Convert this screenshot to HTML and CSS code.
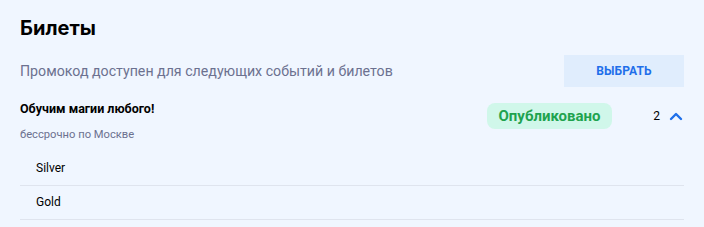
FILE: index.html
```html
<!DOCTYPE html>
<html lang="ru">
<head>
<meta charset="utf-8">
<link rel="stylesheet" href="styles.css">
</head>
<body>
<div class="page">
  <h1 class="title">Билеты</h1>
  <div class="promo">
    <p class="promo-text">Промокод доступен для следующих событий и билетов</p>
    <button class="btn">ВЫБРАТЬ</button>
  </div>
  <div class="event">
    <div class="event-info">
      <div class="event-name">Обучим магии любого!</div>
      <div class="event-date">бессрочно по Москве</div>
    </div>
    <span class="badge">Опубликовано</span>
    <div class="count">
      <span class="num">2</span>
      <svg class="chev" width="16" height="10" viewBox="0 0 16 10"><path d="M3 8 L8 3 L13 8" fill="none" stroke="#1f6fea" stroke-width="2.4" stroke-linecap="round" stroke-linejoin="round"/></svg>
    </div>
  </div>
  <ul class="tickets">
    <li class="ticket">Silver</li>
    <li class="ticket">Gold</li>
  </ul>
</div>
</body>
</html>
```
FILE: styles.css
```css
html, body {
  margin: 0;
  padding: 0;
  background: #f0f6ff;
  font-family: Roboto, "Noto Sans", sans-serif;
}
.page {
  padding: 16px 20px 0 20px;
}
.title {
  margin: 0;
  font-family: Inter, Roboto, sans-serif;
  font-size: 20px;
  line-height: 24px;
  font-weight: 700;
  color: #000;
}
.promo {
  display: flex;
  align-items: center;
  justify-content: space-between;
  margin-top: 15px;
  height: 32px;
}
.promo-text {
  margin: 0;
  font-size: 14.2px;
  color: #6c7190;
}
.btn {
  width: 120px;
  height: 32px;
  border: none;
  background: #e0edfd;
  color: #1f6fea;
  font-family: inherit;
  font-size: 12px;
  font-weight: 700;
  letter-spacing: 0.1px;
  padding: 0;
}
.event {
  display: flex;
  align-items: flex-start;
  margin-top: 14px;
}
.event-info {
  flex: 1;
}
.event-name {
  font-size: 12.5px;
  font-weight: 700;
  line-height: 16px;
  color: #000;
}
.event-date {
  margin-top: 10px;
  font-size: 11.2px;
  line-height: 16px;
  color: #6c7190;
}
.badge {
  margin-top: 2px;
  height: 26px;
  width: 125px;
  display: flex;
  align-items: center;
  justify-content: center;
  border-radius: 8px;
  background: #d0f7ea;
  color: #1fa34f;
  font-size: 15px;
  font-weight: 700;
}
.count {
  width: 72px;
  display: flex;
  align-items: center;
  justify-content: flex-end;
  gap: 8px;
  height: 26px;
  margin-top: 2px;
}
.num {
  font-size: 12px;
  color: #000;
}
.chev {
  display: block;
}
.tickets {
  list-style: none;
  margin: 9px 0 0 0;
  padding: 0;
}
.ticket {
  height: 33px;
  line-height: 33px;
  padding-left: 16px;
  border-bottom: 1px solid #dfe4ee;
  font-size: 12px;
  color: #000;
}
```
